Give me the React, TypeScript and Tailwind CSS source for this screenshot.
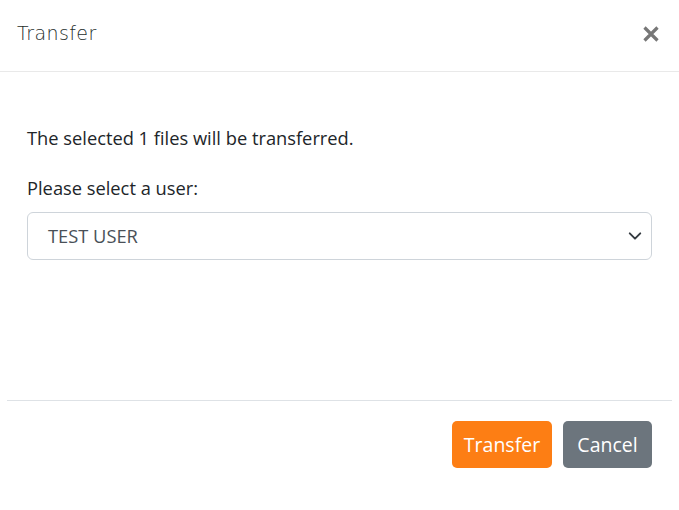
export default function App() {
  return (
    <div className="flex h-[510px] w-[679px] flex-col bg-white font-['Open_Sans','Noto_Sans',sans-serif] text-[#212529]">
      <div className="flex h-[72px] items-center justify-between border-b border-[#e9e9e9] pb-[4px] pl-[17px] pr-[20px]">
        <h1 className="font-['DejaVu_Sans',sans-serif] text-[19px] font-extralight tracking-[0.4px] text-[#1e2e2c]">
          Transfer
        </h1>
        <button className="flex h-4 w-4 items-center justify-center text-[#777]">
          <svg width="16" height="16" viewBox="0 0 16 16">
            <path d="M1.5 1.5 L14.5 14.5 M14.5 1.5 L1.5 14.5" stroke="currentColor" strokeWidth="3.2" strokeLinecap="butt" />
          </svg>
        </button>
      </div>

      <div className="flex-1 px-[27px] pt-[52px]">
        <p className="text-[18.3px] leading-[28px]">The selected 1 files will be transferred.</p>
        <p className="mt-[22px] text-[18.3px] leading-[28px]">Please select a user:</p>
        <div className="mt-[10px] flex h-[48px] items-center justify-between rounded-[6px] border border-[#ced4da] pl-[20px] pr-[9px]">
          <span className="text-[18.3px] text-[#495057]">TEST USER</span>
          <svg width="14" height="14" viewBox="0 0 16 16">
            <path d="M2 5 L8 11 L14 5" fill="none" stroke="#343a40" strokeWidth="2.2" strokeLinecap="round" strokeLinejoin="round" />
          </svg>
        </div>
      </div>

      <div className="mx-[7px] flex h-[110px] items-start justify-end gap-[11px] border-t border-[#dee2e6] pr-[20px] pt-[20px]">
        <button className="h-[47px] w-[100px] rounded-[5px] bg-[#fd7e14] text-[19.5px] text-white">Transfer</button>
        <button className="h-[47px] w-[89px] rounded-[5px] bg-[#6c757d] text-[19.5px] text-white">Cancel</button>
      </div>
    </div>
  );
}
